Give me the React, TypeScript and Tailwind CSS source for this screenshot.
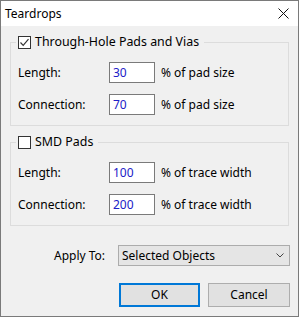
import React from "react";

const font = { fontFamily: '"Noto Sans", "Segoe UI", sans-serif' };

function Check({ checked }: { checked: boolean }) {
  return (
    <span className="w-[13px] h-[13px] border border-[#333333] bg-white flex items-center justify-center shrink-0">
      {checked && (
        <svg width="11" height="11" viewBox="0 0 11 11">
          <path d="M1.5 5.5 L4.2 8.3 L9.5 2.2" fill="none" stroke="#333333" strokeWidth="1.2" />
        </svg>
      )}
    </span>
  );
}

function Row({ label, value, unit }: { label: string; value: string; unit: string }) {
  return (
    <div className="flex items-center h-[21px]">
      <span className="w-[91px]">{label}</span>
      <div className="w-[46px] h-[21px] border border-[#7a7a7a] bg-white flex items-center pl-[3px] text-[#2020c8]">
        {value}
      </div>
      <span className="ml-[6px]">{unit}</span>
    </div>
  );
}

function Group({
  checked,
  title,
  rows,
}: {
  checked: boolean;
  title: string;
  rows: { label: string; value: string; unit: string }[];
}) {
  return (
    <fieldset className="border border-[#dcdcdc] pl-[7px] pr-[7px] pb-[10px] mx-[9px]">
      <legend className="px-[2px] -ml-[2px] h-[14px]">
        <div className="flex items-center gap-[4px] h-[14px] pr-[3px]">
          <Check checked={checked} />
          <span className="leading-[14px] text-[12.4px]">{title}</span>
        </div>
      </legend>
      <div className="flex flex-col gap-[11px] pt-[13px]">
        {rows.map((r) => (
          <Row key={r.label} {...r} />
        ))}
      </div>
    </fieldset>
  );
}

export default function App() {
  return (
    <div
      className="w-[299px] h-[317px] border border-[#7a7a7a] bg-[#f0f0f0] text-[12px] text-[#000000] flex flex-col"
      style={font}
    >
      <div className="h-[25px] bg-white flex items-center justify-between pl-[4px] pr-[9px] shrink-0">
        <span>Teardrops</span>
        <svg width="11" height="11" viewBox="0 0 11 11">
          <path d="M0.5 0.5 L10.5 10.5 M10.5 0.5 L0.5 10.5" stroke="#111111" strokeWidth="1" />
        </svg>
      </div>
      <div className="pt-[9px]">
        <Group
          checked
          title="Through-Hole Pads and Vias"
          rows={[
            { label: "Length:", value: "30", unit: "% of pad size" },
            { label: "Connection:", value: "70", unit: "% of pad size" },
          ]}
        />
      </div>
      <div className="pt-[9px]">
        <Group
          checked={false}
          title="SMD Pads"
          rows={[
            { label: "Length:", value: "100", unit: "% of trace width" },
            { label: "Connection:", value: "200", unit: "% of trace width" },
          ]}
        />
      </div>
      <div className="flex items-center mt-[19px] pl-[53px] pr-[8px]">
        <span className="w-[64px]">Apply To:</span>
        <div className="flex-1 h-[21px] border border-[#acacac] bg-[#e5e5e5] flex items-center justify-between pl-[3px] pr-[5px]">
          <span>Selected Objects</span>
          <svg width="8" height="5" viewBox="0 0 8 5">
            <path d="M0.5 0.5 L4 4 L7.5 0.5" fill="none" stroke="#444444" strokeWidth="1" />
          </svg>
        </div>
      </div>
      <div className="flex justify-end gap-[8px] mt-[17px] pr-[8px]">
        <button className="w-[81px] h-[24px] border-2 border-[#0078d7] bg-[#e1e1e1]">OK</button>
        <button className="w-[82px] h-[24px] border border-[#adadad] bg-[#e1e1e1]">Cancel</button>
      </div>
    </div>
  );
}
